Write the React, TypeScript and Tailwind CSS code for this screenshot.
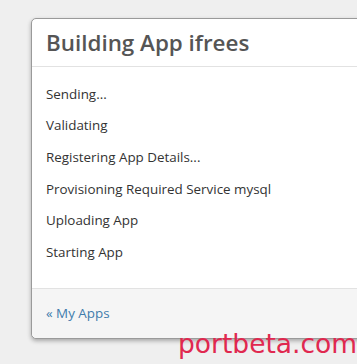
const STEPS = [
  'Sending...',
  'Validating',
  'Registering App Details...',
  'Provisioning Required Service mysql',
  'Uploading App',
  'Starting App',
]

export default function App() {
  return (
    <div className="relative h-[364px] w-[357px] overflow-hidden bg-[#efefef] pl-[31px] pt-[18px] font-['Open_Sans',sans-serif]">
      <div className="w-[340px] rounded-[5px] border border-[#9a9a9a] bg-white shadow-[0_2px_4px_rgba(0,0,0,0.3)]">
        {/* header */}
        <div className="flex h-[48px] items-center border-b border-[#e2e2e2] px-[14px]">
          <h1 className="text-[22.4px] font-semibold text-[#555]">Building App ifrees</h1>
        </div>

        <div className="px-[14px] pt-[11px] pb-[20px]">
          {STEPS.map((s, i) => (
            <div key={'step' + i} className="flex h-[31.6px] items-center text-[13.4px] text-[#333]">
              {s}
            </div>
          ))}
        </div>

        {/* footer */}
        <div className="flex h-[50px] items-center rounded-b-[5px] border-t border-[#e2e2e2] bg-[#f5f5f5] px-[14px]">
          <a href="#" className="text-[13.4px] text-[#3f7cac]">
            « My Apps
          </a>
        </div>
      </div>

      <div className="absolute left-[178px] top-[331px] font-['DejaVu_Sans',sans-serif] text-[26.5px] leading-none text-[#e0284f]">
        portbeta.com
      </div>
    </div>
  )
}
